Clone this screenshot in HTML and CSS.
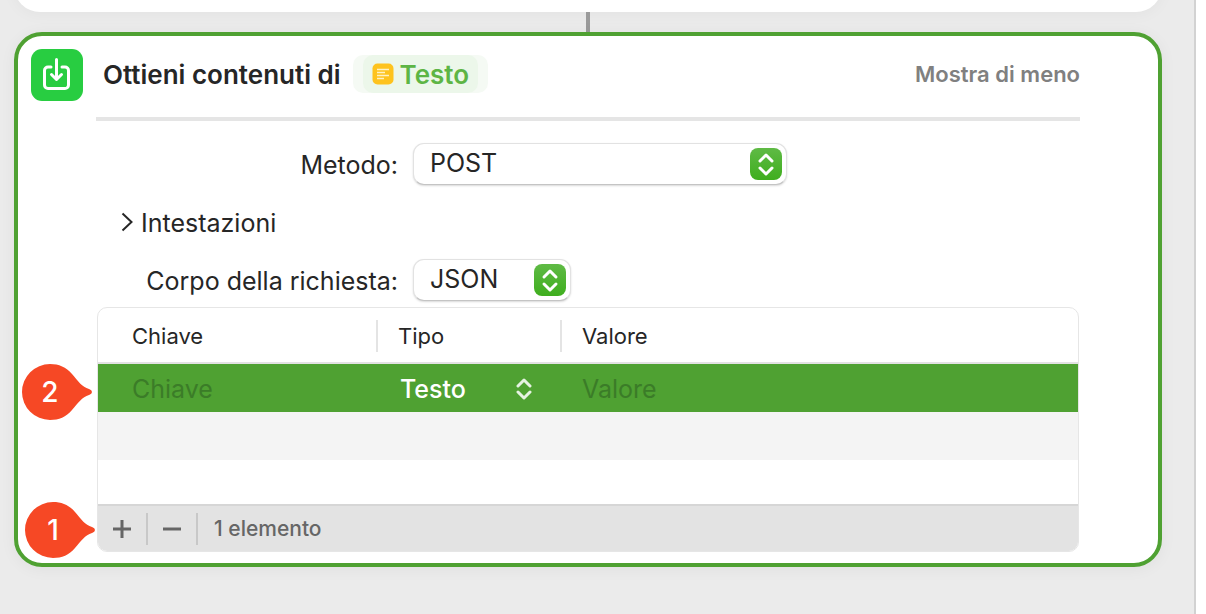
FILE: index.html
```html
<!DOCTYPE html>
<html lang="it">
<head>
    <meta charset="UTF-8">
    <meta name="viewport" content="width=device-width, initial-scale=1.0">
    <title>Ottieni contenuti di URL</title>
    <link rel="stylesheet" href="styles.css">
</head>
<body>
    <main class="editor">
        <div class="previous-action"></div>
        <div class="connector"></div>

        <section class="action">
            <header class="action-header">
                <svg class="action-icon" viewBox="0 0 52 52" aria-hidden="true">
                    <rect width="52" height="52" rx="11" fill="#28cd41"/>
                    <g fill="none" stroke="#fff" stroke-width="3" stroke-linecap="round" stroke-linejoin="round">
                        <path d="M20 18h-3a3.500 3.500 0 0 0-3.500 3.500v14.500a3.500 3.500 0 0 0 3.500 3.500h17a3.500 3.500 0 0 0 3.500-3.500V21.500a3.500 3.500 0 0 0-3.500-3.500h-3"/>
                        <path d="M25.500 10.500v19M20.500 25.500l5 5 5-5"/>
                    </g>
                </svg>
                <h1>Ottieni contenuti di</h1>
                <button type="button" class="token">
                    <span class="token-inner">
                        <svg width="22" height="22" viewBox="0 0 22 22" aria-hidden="true">
                            <rect x="0.500" y="0.500" width="21" height="21" rx="5" fill="#fec31e"/>
                            <path d="M5 6.500h12M5 9.500h8M5 12.500h12M5 15.500h7" stroke="#fff2c4" stroke-width="1.500"/>
                        </svg>
                        Testo
                    </span>
                </button>
                <button type="button" class="show-less">Mostra di meno</button>
            </header>

            <div class="action-body">
                <form class="fields">
                    <label for="method">Metodo:</label>
                    <div class="select select-wide">
                        <select id="method">
                            <option>POST</option>
                        </select>
                        <svg class="stepper" viewBox="0 0 32 32" aria-hidden="true">
                            <path d="M10 13l6-6 6 6M10 20l6 6 6-6"/>
                        </svg>
                    </div>

                    <details>
                        <summary>
                            <svg width="12" height="20" viewBox="0 0 12 20" aria-hidden="true">
                                <path d="M1.500 1.500l9 8.500-9 8.500" fill="none" stroke="#262626" stroke-width="2"/>
                            </svg>
                            <span>Intestazioni</span>
                        </summary>
                    </details>

                    <label for="body-type">Corpo della richiesta:</label>
                    <div class="select select-small">
                        <select id="body-type">
                            <option>JSON</option>
                        </select>
                        <svg class="stepper" viewBox="0 0 32 32" aria-hidden="true">
                            <path d="M10 13l6-6 6 6M10 20l6 6 6-6"/>
                        </svg>
                    </div>
                </form>

                <div class="json-box">
                    <table>
                        <thead>
                            <tr>
                                <th class="col-key"><span>Chiave</span></th>
                                <th class="col-type"><span>Tipo</span></th>
                                <th><span>Valore</span></th>
                            </tr>
                        </thead>
                        <tbody>
                            <tr class="selected">
                                <td><input type="text" placeholder="Chiave" aria-label="Chiave"></td>
                                <td>
                                    <div class="type-select">
                                        <select aria-label="Tipo">
                                            <option>Testo</option>
                                        </select>
                                        <svg width="16" height="24" viewBox="0 0 16 24" aria-hidden="true">
                                            <path d="M2 9l6-6 6 6M2 15l6 6 6-6"/>
                                        </svg>
                                    </div>
                                </td>
                                <td><input type="text" placeholder="Valore" aria-label="Valore"></td>
                            </tr>
                            <tr class="empty"><td colspan="3"></td></tr>
                            <tr class="empty last"><td colspan="3"></td></tr>
                        </tbody>
                    </table>
                    <div class="toolbar">
                        <button type="button" aria-label="Aggiungi">
                            <svg width="18" height="18" viewBox="0 0 18 18"><path d="M0 9h18M9 0v18"/></svg>
                        </button>
                        <button type="button" aria-label="Rimuovi">
                            <svg width="18" height="18" viewBox="0 0 18 18"><path d="M0 9h18"/></svg>
                        </button>
                        <span>1 elemento</span>
                    </div>

                    <!-- Numbered callouts -->
                    <div class="marker marker-row">
                        <svg viewBox="0 0 70 56" aria-hidden="true">
                            <path d="M28 0C37 0 44 3 50 10C56 17 60 23 67 25Q70 26 70 28Q70 30 67 31C60 33 56 39 50 46C44 53 37 56 28 56A28 28 0 0 1 28 0Z"/>
                        </svg>
                        <span>2</span>
                    </div>
                    <div class="marker marker-add">
                        <svg viewBox="0 0 70 56" aria-hidden="true">
                            <path d="M28 0C37 0 44 3 50 10C56 17 60 23 67 25Q70 26 70 28Q70 30 67 31C60 33 56 39 50 46C44 53 37 56 28 56A28 28 0 0 1 28 0Z"/>
                        </svg>
                        <span>1</span>
                    </div>
                </div>
            </div>
        </section>
    </main>
</body>
</html>
```
FILE: styles.css
```css
* {
    box-sizing: border-box;
}
body {
    margin: 0;
    background-color: #fff;
    color: #262626;
    font-family: Inter, "Liberation Sans", sans-serif;
    font-size: 25px;
}
button, select, input {
    font: inherit;
    color: inherit;
    margin: 0;
    padding: 0;
    border: none;
    background: none;
}
select {
    appearance: none;
    width: 100%;
}

.editor {
    min-height: 100vh;
    margin-right: 10px;
    padding: 0 32px 40px 14px;
    background-color: #ebebeb;
    border-right: 2px solid #d2d2d2;
    overflow: hidden;
}
.previous-action {
    height: 72px;
    margin-top: -60px;
    background-color: #fff;
    border-radius: 26px;
    box-shadow: 0 2px 16px rgba(0, 0, 0, 0.04);
}
.connector {
    width: 4px;
    height: 20px;
    margin: 0 auto;
    background-color: #9a9a9a;
}

/* Action card */
.action {
    padding: 13px 78px 11px 13px;
    background-color: #fff;
    border: 4px solid #4fa132;
    border-radius: 28px;
    box-shadow: 0 2px 16px rgba(0, 0, 0, 0.05);
}
.action-header {
    display: flex;
    align-items: center;
    height: 52px;
}
.action-icon {
    width: 52px;
    height: 52px;
    margin-right: 20px;
}
h1 {
    margin: 0 12px 2px 0;
    font-size: 26px;
    font-weight: 600;
}
.token {
    margin-bottom: 2px;
    padding: 0 10px;
    border-radius: 10px;
    background-color: #f5faf4;
    color: #5db545;
    font-size: 26px;
    font-weight: 600;
}
.token-inner {
    display: flex;
    align-items: center;
    gap: 6px;
    height: 38px;
    padding: 0 9px;
    border-radius: 10px;
    background-color: #ecf7ea;
}
.show-less {
    margin: 0 0 2px auto;
    color: #808080;
    font-size: 22px;
    font-weight: 600;
}
.action-body {
    margin: 16px 0 0 65px;
    border-top: 4px solid #e5e5e5;
}

.fields {
    display: grid;
    grid-template-columns: 302px 1fr;
    grid-auto-rows: 42px;
    align-items: center;
    gap: 16px 15px;
    padding: 22px 0 6px;
}
.fields label {
    padding-top: 2px;
    text-align: right;
}
.fields details {
    grid-column: 1 / -1;
    padding-left: 25px;
}
summary {
    display: flex;
    align-items: center;
    gap: 8px;
}
summary span {
    padding-top: 2px;
}
.select {
    position: relative;
}
.select-wide {
    width: 374px;
}
.select-small {
    width: 158px;
}
.select select {
    display: block;
    height: 42px;
    padding: 0 48px 2px 16px;
    border: 1px solid #e2e2e2;
    border-bottom-color: #c4c4c4;
    border-radius: 11px;
    background-color: #fff;
    box-shadow: 0 1px 2px rgba(0, 0, 0, 0.15);
}
.stepper {
    position: absolute;
    top: 5px;
    right: 5px;
    width: 32px;
    height: 32px;
    border-radius: 8px;
    background: linear-gradient(#5fba45, #3fae1e);
    pointer-events: none;
}
.stepper path, .type-select path {
    fill: none;
    stroke: #fff;
    stroke-width: 3;
    stroke-linecap: round;
    stroke-linejoin: round;
}

/* Key/value table */
.json-box {
    position: relative;
    margin: 0 1px;
    border: 1px solid #e6e6e6;
    border-radius: 10px;
}
table {
    width: 100%;
    table-layout: fixed;
    border-collapse: separate;
    border-spacing: 0;
}
th, td {
    padding: 0;
    text-align: left;
}
th {
    height: 56px;
    padding-top: 2px;
    border-bottom: 2px solid #e2e2e2;
    font-size: 22px;
    font-weight: 400;
}
th span {
    display: block;
    padding-left: 20px;
    border-left: 2px solid #e4e4e4;
    line-height: 32px;
}
.col-key {
    width: 278px;
}
.col-key span {
    padding-left: 34px;
    border-left: none;
}
.col-type {
    width: 184px;
}
td {
    height: 48px;
}
.selected {
    background-color: #4fa132;
    color: #fff;
}
.selected td {
    padding-top: 2px;
}
.selected input {
    display: block;
    width: 100%;
    padding-left: 22px;
}
.selected td:first-child input {
    padding-left: 34px;
}
.selected input::placeholder {
    color: #3b7c28;
    opacity: 1;
}
.type-select {
    display: flex;
    align-items: center;
    padding: 0 28px 0 24px;
    font-weight: 500;
}
.type-select svg {
    flex: none;
}
.type-select path {
    stroke: #e6f2e2;
}
.empty td {
    background-color: #f4f4f4;
}
.last td {
    height: 44px;
    background-color: #fff;
}
.toolbar {
    display: flex;
    align-items: center;
    height: 47px;
    border-top: 2px solid #d6d6d6;
    border-radius: 0 0 9px 9px;
    background-color: #e3e3e3;
    color: #666;
    font-size: 21px;
    font-weight: 500;
}
.toolbar button {
    display: flex;
    align-items: center;
    justify-content: center;
    width: 50px;
    height: 32px;
    border-right: 2px solid #c8c8c8;
}
.toolbar path {
    stroke: #666;
    stroke-width: 3;
}
.toolbar span {
    margin-left: 16px;
}

.marker {
    position: absolute;
    width: 70px;
    height: 56px;
    color: #fff;
}
.marker svg {
    display: block;
    fill: #f64825;
}
.marker span {
    position: absolute;
    inset: 0 14px 0 0;
    font-size: 28px;
    font-weight: 500;
    line-height: 56px;
    text-align: center;
}
.marker-row {
    top: 56px;
    left: -76px;
}
.marker-add {
    bottom: -7px;
    left: -73px;
}
```
